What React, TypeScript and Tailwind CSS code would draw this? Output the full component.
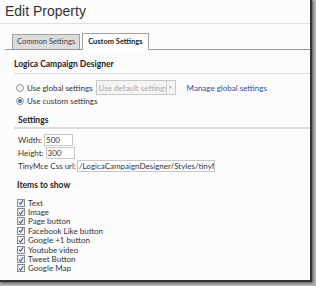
import React from "react";

const items = [
  "Text",
  "Image",
  "Page button",
  "Facebook Like button",
  "Google +1 button",
  "Youtube video",
  "Tweet Button",
  "Google Map",
];

function Check() {
  return (
    <span className="w-[8px] h-[8px] border border-[#8a8a8a] bg-[#eef2f7] flex items-center justify-center shrink-0">
      <svg width="7" height="7" viewBox="0 0 7 7">
        <path d="M1 3.5 L3 5.5 L6 0.8" stroke="#2a4a8a" strokeWidth="1.2" fill="none" />
      </svg>
    </span>
  );
}

function Radio({ on }: { on?: boolean }) {
  return (
    <span className="w-[8px] h-[8px] rounded-full border border-[#9a9a9a] bg-[#f2f2f2] flex items-center justify-center shrink-0">
      {on && <span className="w-[4px] h-[4px] rounded-full bg-[#3a78b8]" />}
    </span>
  );
}

export default function App() {
  return (
    <div className="w-[316px] h-[286px] bg-[#b0b0b0]" style={{ fontFamily: "Lato, 'Open Sans', sans-serif" }}>
      <div className="w-[312px] h-[282px] bg-[#fcfcfc] border-r-[2px] border-b-[2px] border-[#333] shadow-[1px_1px_2px_#555] flex flex-col">
        <div className="pl-[5px] pt-[3px] text-[14px] leading-[17px] text-[#333]" style={{ fontFamily: "'Liberation Sans', Arial, sans-serif" }}>
          Edit Property
        </div>
        <div className="mt-[3px] h-[1px] bg-[#e2e2e2]" />
        <div className="mt-[9px] ml-[5px] flex items-end border-b border-[#9a9a9a] text-[7.5px] text-[#333]">
          <div className="ml-[7px] h-[15px] px-[4px] flex items-center border border-b-0 border-[#a0a0a0] bg-[#dcdcdc] text-[#444]">
            Common Settings
          </div>
          <div className="ml-[2px] h-[17px] px-[5px] flex items-center border border-b-0 border-[#a0a0a0] bg-white font-bold text-[#222] -mb-[1px]">
            Custom Settings
          </div>
        </div>
        <div className="pl-[14px] mt-[9px] text-[8.5px] font-bold text-[#222] leading-[10px]">Logica Campaign Designer</div>
        <div className="ml-[14px] mt-[4px] h-[1px] bg-[#dedede]" />
        <div className="pl-[16px] mt-[6px] flex items-center gap-[3px] text-[8px] text-[#333] whitespace-nowrap">
          <Radio />
          <span>Use global settings</span>
          <span className="h-[15px] w-[80px] border border-[#c8c8c8] bg-[#f4f4f4] text-[#aaa] flex items-center pl-[2px] overflow-hidden">
            <span className="flex-1 overflow-hidden">Use default settings</span>
            <span className="w-[9px] h-[13px] shrink-0 border-l border-[#d0d0d0] flex items-center justify-center text-[5px] text-[#aaa]">▾</span>
          </span>
          <span className="ml-[8px] text-[#2b4da3]">Manage global settings</span>
        </div>
        <div className="pl-[16px] flex items-center gap-[3px] text-[8px] text-[#333]">
          <Radio on />
          <span>Use custom settings</span>
        </div>
        <div className="pl-[18px] mt-[8px] text-[8.5px] font-bold text-[#222] leading-[10px]">Settings</div>
        <div className="ml-[14px] mt-[2px] h-[2px] bg-[#dcdcdc]" />
        <div className="pl-[18px] mt-[5px] flex flex-col gap-[1px] text-[8px] text-[#333] whitespace-nowrap">
          <div className="flex items-center gap-[2px]">
            <span>Width:</span>
            <span className="w-[29px] h-[12px] border border-[#c8c8c8] bg-white pl-[1px] flex items-center">500</span>
          </div>
          <div className="flex items-center gap-[2px]">
            <span>Height:</span>
            <span className="w-[29px] h-[12px] border border-[#c8c8c8] bg-white pl-[1px] flex items-center">300</span>
          </div>
          <div className="flex items-center gap-[1px]">
            <span>TinyMce Css url:</span>
            <span className="w-[138px] h-[12px] border border-[#c8c8c8] bg-white pl-[1px] flex items-center overflow-hidden">/LogicaCampaignDesigner/Styles/tinyMc</span>
          </div>
        </div>
        <div className="pl-[17px] mt-[8px] text-[8.5px] font-bold text-[#222] leading-[10px]">Items to show</div>
        <div className="pl-[17px] mt-[8px] flex flex-col text-[8px] text-[#333]">
          {items.map((t) => (
            <div key={t} className="h-[9.4px] flex items-center gap-[3px]">
              <Check />
              <span>{t}</span>
            </div>
          ))}
        </div>
      </div>
    </div>
  );
}
